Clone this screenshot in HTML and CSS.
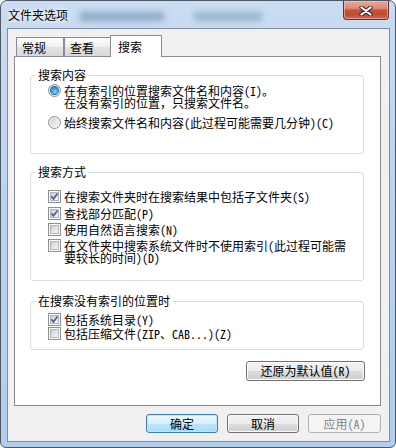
FILE: index.html
```html
<!DOCTYPE html>
<html lang="zh-CN">
<head>
<meta charset="utf-8">
<title>文件夹选项</title>
<link rel="stylesheet" href="styles.css">
</head>
<body>
<div class="window">
  <div class="titlebar">
    <span class="title">文件夹选项</span>
    <span class="blur blur1"></span>
    <span class="blur blur2"></span>
    <span class="close">
      <svg width="14" height="10" viewBox="0 0 14 10">
        <path d="M2.5 1.5 L11.5 8.5 M11.5 1.5 L2.5 8.5" stroke="#3b2b2b" stroke-width="4.2" stroke-linecap="round"/>
        <path d="M2.5 1.5 L11.5 8.5 M11.5 1.5 L2.5 8.5" stroke="#ffffff" stroke-width="2.2" stroke-linecap="round"/>
      </svg>
    </span>
  </div>
  <div class="client">
    <div class="tabs">
      <span class="tab tab1">常规</span>
      <span class="tab tab2">查看</span>
      <span class="tab tab-sel">搜索</span>
    </div>
    <div class="panel">
      <fieldset class="group g1">
        <legend>搜索内容</legend>
        <div class="opt o-first1">
          <span class="rb"><span class="rb-dot"></span></span>
          <span class="lbl"><span class="ln">在有索引的位置搜索文件名和内容(I)。</span><span class="ln">在没有索引的位置，只搜索文件名。</span></span>
        </div>
        <div class="opt o-r2">
          <span class="rb"></span>
          <span class="lbl">始终搜索文件名和内容(此过程可能需要几分钟)(C)</span>
        </div>
      </fieldset>
      <fieldset class="group g2">
        <legend>搜索方式</legend>
        <div class="opt o-first2">
          <span class="cb"><span class="cb-in"><svg width="9" height="9" viewBox="0 0 9 9"><path d="M1.3 4.2 L3.4 6.8 L7.6 1.4" fill="none" stroke="#4b5f96" stroke-width="1.7"/></svg></span></span>
          <span class="lbl">在搜索文件夹时在搜索结果中包括子文件夹(S)</span>
        </div>
        <div class="opt o-c2">
          <span class="cb"><span class="cb-in"><svg width="9" height="9" viewBox="0 0 9 9"><path d="M1.3 4.2 L3.4 6.8 L7.6 1.4" fill="none" stroke="#4b5f96" stroke-width="1.7"/></svg></span></span>
          <span class="lbl">查找部分匹配(P)</span>
        </div>
        <div class="opt o-c3">
          <span class="cb"><span class="cb-in"></span></span>
          <span class="lbl">使用自然语言搜索(N)</span>
        </div>
        <div class="opt o-c3">
          <span class="cb"><span class="cb-in"></span></span>
          <span class="lbl"><span class="ln">在文件夹中搜索系统文件时不使用索引(此过程可能需</span><span class="ln">要较长的时间)(D)</span></span>
        </div>
      </fieldset>
      <fieldset class="group g3">
        <legend>在搜索没有索引的位置时</legend>
        <div class="opt o-first3">
          <span class="cb"><span class="cb-in"><svg width="9" height="9" viewBox="0 0 9 9"><path d="M1.3 4.2 L3.4 6.8 L7.6 1.4" fill="none" stroke="#4b5f96" stroke-width="1.7"/></svg></span></span>
          <span class="lbl">包括系统目录(Y)</span>
        </div>
        <div class="opt o-c4">
          <span class="cb"><span class="cb-in"></span></span>
          <span class="lbl">包括压缩文件(ZIP、CAB...)(Z)</span>
        </div>
      </fieldset>
      <div class="reset-row">
        <button class="btn btn-reset">还原为默认值(R)</button>
      </div>
    </div>
    <div class="footer">
      <button class="btn btn-default">确定</button>
      <button class="btn">取消</button>
      <button class="btn btn-disabled">应用(A)</button>
    </div>
  </div>
</div>
</body>
</html>
```
FILE: styles.css
```css
* { box-sizing: border-box; }
html, body { margin: 0; padding: 0; }
body {
  width: 396px;
  height: 448px;
  background: #ffffff;
  font-family: "Noto Sans Mono CJK SC", "Noto Sans CJK SC", "Liberation Sans", sans-serif;
  font-size: 12px;
  line-height: 12px;
  color: #000;
  overflow: hidden;
}
.window {
  width: 396px;
  height: 448px;
  border: 1px solid #4e5866;
  border-radius: 7px 7px 6px 6px;
  background: linear-gradient(180deg, #cadcf1 0%, #bcd3ed 45%, #b3cdea 100%);
  padding: 0 5px 5px 6px;
  display: flex;
  flex-direction: column;
  overflow: hidden;
}
.titlebar {
  height: 27px;
  display: flex;
  align-items: flex-start;
  flex: none;
}
.title {
  margin-top: 8px;
  margin-left: 1px;
  font-family: "Noto Sans CJK SC", sans-serif;
  font-size: 12px;
  line-height: 12px;
  color: #000;
  text-shadow: 0 0 6px #ffffff, 0 0 3px #ffffff;
}
.blur {
  height: 9px;
  margin-top: 11px;
  background: #7f97b8;
  filter: blur(3px);
  opacity: 0.75;
}
.blur1 { width: 84px; margin-left: 12px; }
.blur2 { width: 68px; margin-left: 30px; opacity: 0.6; }
.close {
  margin-left: auto;
  margin-right: 1px;
  width: 46px;
  height: 19px;
  border: 1px solid #6a3027;
  border-top: none;
  border-radius: 0 0 4px 4px;
  background: linear-gradient(180deg, #e9a898 0%, #dd8b76 40%, #c7503a 52%, #c34a31 75%, #d66a4b 100%);
  box-shadow: inset 0 0 0 1px rgba(255, 210, 200, 0.5);
  display: flex;
  align-items: center;
  justify-content: center;
  padding-top: 1px;
}
.client {
  flex: 1;
  border: 1px solid #7d8fa6;
  background: #f0f0f0;
  padding: 6px 8px 0 6px;
  display: flex;
  flex-direction: column;
}
.tabs {
  display: flex;
  align-items: flex-end;
  padding-left: 2px;
  height: 21px;
  flex: none;
}
.tab {
  height: 19px;
  border: 1px solid #898c95;
  border-bottom: none;
  background: linear-gradient(180deg, #fdfdfd 0%, #efefef 50%, #e3e3e3 51%, #d9d9d9 100%);
  padding: 4px 0 0 5px;
  line-height: 12px;
}
.tab1 { width: 48px; }
.tab2 { width: 47px; }
.tab-sel {
  width: 52px;
  height: 22px;
  margin-left: -1px;
  margin-bottom: -1px;
  background: #ffffff;
  padding: 5px 0 0 7px;
  position: relative;
  z-index: 1;
}
.panel {
  height: 350px;
  border: 1px solid #898c95;
  background: #ffffff;
  flex: none;
  display: flex;
  flex-direction: column;
}
.group {
  border: 1px solid #d5dfe5;
  border-radius: 3px;
  padding: 0;
  margin: 0 16px 0 15px;
  min-width: 0;
}
.group legend {
  padding: 0 2px;
  margin-left: 5px;
  line-height: 14px;
  height: 14px;
}
.g1 { margin-top: 11px; padding-bottom: 24px; }
.g2 { margin-top: 11px; padding-bottom: 16px; }
.g3 { margin-top: 13px; padding-bottom: 9px; }
.opt {
  display: flex;
  align-items: flex-start;
  gap: 3px;
  padding-left: 17px;
}
.o-first1 { margin-top: 3px; }
.o-r2 { margin-top: 8px; }
.o-first2 { margin-top: 12px; }
.o-c2 { margin-top: 5px; }
.o-c3 { margin-top: 4px; }
.o-first3 { margin-top: 6px; }
.o-c4 { margin-top: 2px; }
.lbl { line-height: 12px; white-space: nowrap; display: flex; flex-direction: column; }
.ln { display: block; height: 12px; }
.rb {
  flex: none;
  width: 13px;
  height: 13px;
  border-radius: 50%;
  border: 1px solid #8b8d8f;
  background: linear-gradient(135deg, #c7cacf 0%, #e6e7e9 55%, #fbfbfb 100%);
  box-shadow: inset 0 0 0 1px #f4f4f4;
  display: flex;
  align-items: center;
  justify-content: center;
  margin-top: -1px;
}
.rb-dot {
  width: 7px;
  height: 7px;
  border-radius: 50%;
  background: radial-gradient(circle at 55% 65%, #8fe0ff 0%, #3aa6ea 40%, #1c5d9e 100%);
  box-shadow: 0 0 0 1px #2a5d8c;
}
.cb {
  flex: none;
  width: 13px;
  height: 13px;
  border: 1px solid #8e8f8f;
  background: #ffffff;
  padding: 1px;
  margin-top: -1px;
}
.cb-in {
  display: block;
  width: 9px;
  height: 9px;
  border: 1px solid #b0b4ba;
  background: linear-gradient(135deg, #c9ccd2 0%, #e2e4e7 50%, #f7f7f7 100%);
  overflow: visible;
}
.cb-in svg { display: block; margin: -1px 0 0 -1px; overflow: visible; }
.reset-row {
  display: flex;
  justify-content: flex-end;
  margin: 11px 15px 0 0;
}
.btn {
  font-family: "Noto Sans Mono CJK SC", "Noto Sans CJK SC", "Liberation Sans", sans-serif;
  font-size: 12px;
  line-height: 12px;
  color: #000;
  height: 19px;
  width: 72px;
  padding: 0;
  border: 1px solid #707070;
  border-radius: 3px;
  background: linear-gradient(180deg, #f2f2f2 0%, #ebebeb 50%, #dddddd 51%, #cfcfcf 100%);
  box-shadow: inset 0 0 0 1px #fcfcfc;
  display: flex;
  align-items: center;
  justify-content: center;
}
.btn-reset { width: 119px; height: 20px; }
.footer {
  display: flex;
  justify-content: flex-end;
  gap: 9px;
  margin-top: 8px;
}
.btn-default {
  border-color: #3c7fb1;
  background: linear-gradient(180deg, #eaf6fd 0%, #d9f0fc 50%, #bee6fd 51%, #a7d9f5 100%);
  box-shadow: inset 0 0 0 1px #bfe8fb;
}
.btn-disabled {
  width: 73px;
  border-color: #adb2b5;
  background: #f4f4f4;
  box-shadow: none;
  color: #838383;
}
```
